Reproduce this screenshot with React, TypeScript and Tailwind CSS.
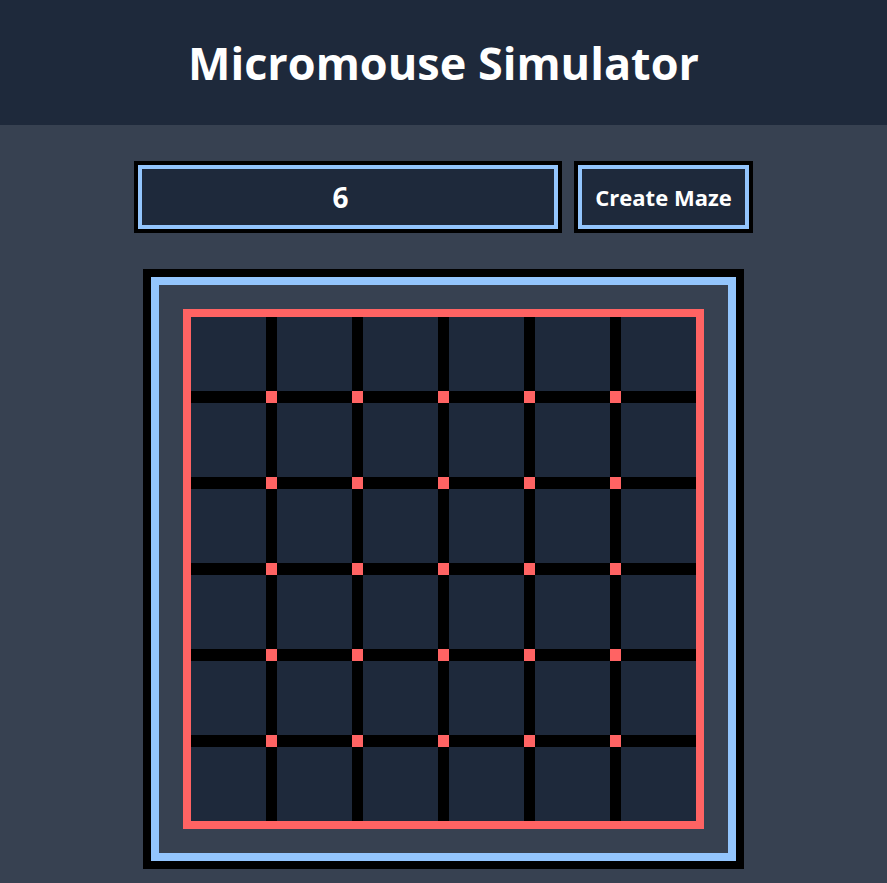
import React from "react";

const N = 6;

export default function App() {
  const cols = "75px 11px 75px 11px 75px 11px 75px 11px 75px 11px 75px";
  const rows = "74px 12px 74px 12px 74px 12px 74px 12px 74px 12px 74px";
  const items: React.ReactNode[] = [];
  for (let r = 0; r < 2 * N - 1; r++) {
    for (let c = 0; c < 2 * N - 1; c++) {
      const rw = r % 2 === 1;
      const cw = c % 2 === 1;
      let cls = "bg-[#1e293b]";
      if (rw && cw) cls = "bg-[#ff6363]";
      else if (rw || cw) cls = "bg-black";
      items.push(<div key={`${r}-${c}`} className={cls} />);
    }
  }
  return (
    <div
      className="min-h-[883px] bg-[#374151] text-white"
      style={{ fontFamily: '"Open Sans", "Noto Sans", sans-serif' }}
    >
      <header className="h-[125px] bg-[#1e293b] flex items-center justify-center">
        <h1 className="text-[45px] font-bold leading-none">Micromouse Simulator</h1>
      </header>
      <div className="flex justify-center gap-3 mt-9">
        <div className="w-[428px] h-[72px] border-4 border-black">
          <input
            type="number"
            className="w-full h-full border-4 border-[#93c5fd] bg-[#1e293b] text-center text-[28px] font-bold text-white outline-none"
            defaultValue="6"
          />
        </div>
        <div className="w-[179px] h-[72px] border-4 border-black">
          <button className="w-full h-full border-4 border-[#93c5fd] bg-[#1e293b] text-[22px] font-bold text-white whitespace-nowrap">
            Create Maze
          </button>
        </div>
      </div>
      <div className="flex justify-center mt-9">
        <div className="border-8 border-black">
          <div className="border-8 border-[#93c5fd] p-6 bg-[#374151]">
            <div className="border-8 border-[#ff6363] bg-black">
              <div
                className="grid"
                style={{ gridTemplateColumns: cols, gridTemplateRows: rows }}
              >
                {items}
              </div>
            </div>
          </div>
        </div>
      </div>
    </div>
  );
}
